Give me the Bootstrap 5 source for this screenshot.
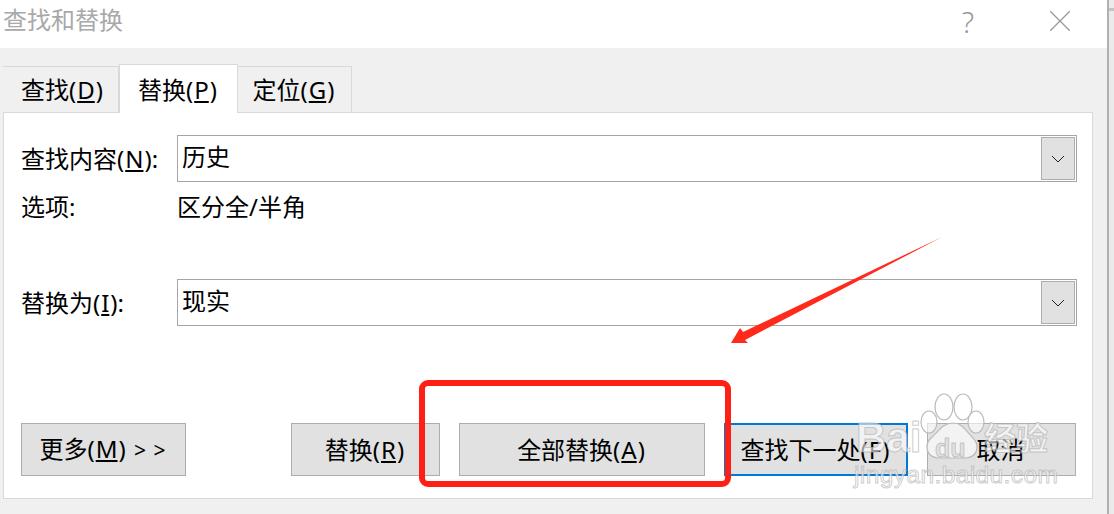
<!DOCTYPE html>
<html lang="zh-CN">
  <head>
    <meta charset="UTF-8" />
    <title>查找和替换</title>
    <link href="https://cdn.jsdelivr.net/npm/bootstrap@5.3.2/dist/css/bootstrap.min.css" rel="stylesheet" />
    <style>
      html, body { height: 514px; overflow: hidden; }
      body {
        background: #ebebeb;
        color: #000;
        font-family: "Noto Sans", "Noto Sans CJK SC", sans-serif;
        font-size: 24px;
        line-height: 34px;
      }
      u { margin: 0 1px; text-underline-offset: 2px; }
      .dlg { width: 1107px; height: 514px; background: #f0f0f0; position: relative; flex: none; }
      .dlg-side { width: 7px; height: 514px; flex: none; border-left: 2px solid #b0b0b0; padding-top: 8px; }
      .dlg-tick { height: 3px; background: #c4c4c4; }
      .dlg-title { height: 48px; background: #fff; padding-left: 3px; color: #a9a9a9; line-height: 40px; }
      .dlg-help { color: #999; width: 30px; text-align: center; margin-right: 67px; font-size: 29px; font-weight: 300; padding-bottom: 4px; }
      .dlg-close { margin-right: 37px; margin-bottom: 6px; }
      .dlg-tabs { padding: 16px 0 0 3px; height: 64px; }
      .dlg-tab { height: 46px; margin-top: 2px; padding-right: 2px; border-top: 1px solid #d9d9d9; border-right: 1px solid #d9d9d9; text-align: center; line-height: 46px; }
      .dlg-tab.first { padding: 0 0 0 3px; }
      .dlg-tab.on { height: 49px; margin-top: 0; background: #fff; border-left: 1px solid #d9d9d9; line-height: 50px; position: relative; z-index: 1; }
      .dlg-panel { width: 1090px; height: 387px; margin-left: 3px; background: #fff; border: 1px solid #d9d9d9; padding: 22px 15px 0 17px; }
      .dlg-row { height: 47px; }
      .dlg-label { width: 156px; flex: none; }
      .dlg-combo { width: 900px; height: 47px; border: 1px solid #a6a6a6; padding: 1px 1px 1px 4px; }
      .dlg-val { padding-bottom: 3px; }
      .dlg-arrow { width: 34px; height: 43px; background: #e1e1e1; border: 1px solid #adadad; }
      .dlg-opts { height: 50px; margin-bottom: 47px; line-height: 50px; }
      .dlg-btns { margin-top: 97px; height: 53px; }
      .dlg-btn { height: 53px; background: #e1e1e1; border: 1px solid #adadad; border-radius: 0; color: #000; font-size: 24px; line-height: 34px; padding: 0 2px 0 0; word-spacing: 2px; }
      .dlg-btn.def { border: 2px solid #0078d7; }
      .dlg-gt { font-size: 21px; }
      .mark-box { position: absolute; left: 419px; top: 380px; width: 312px; height: 107px; border: 6px solid #ff2015; border-radius: 9px; }
      .mark-arrow { position: absolute; left: 728px; top: 234px; }
      .wm { position: absolute; left: 850px; top: 390px; width: 210px; height: 120px; color: rgba(255,255,255,.6); -webkit-text-stroke: 1px rgba(170,170,170,.6); }
      .wm-bai { position: absolute; left: 6px; top: 25px; font: 700 42px/46px "Liberation Sans", sans-serif; }
      .wm-jy { position: absolute; left: 134px; top: 24px; font: 700 32px/44px "Noto Sans CJK SC", sans-serif; }
      .wm-url { position: absolute; left: 4px; top: 70px; font: 400 24.5px/30px "Liberation Sans", sans-serif; letter-spacing: .4px; }
      .wm-du { position: absolute; left: 85px; top: 44px; font: 700 25px/28px "Liberation Sans", sans-serif; color: rgba(210,210,210,.5); }
      .wm-paw { position: absolute; left: 70px; top: 0; }
    </style>
  </head>
  <body class="d-flex">
    <div class="dlg">
      <div class="dlg-title d-flex justify-content-between">
        <span>查找和替换</span>
        <span class="d-flex align-items-center">
          <span class="dlg-help">?</span>
          <svg class="dlg-close" width="20" height="20" viewBox="0 0 20 20"><path d="M0 0 20 20M20 0 0 20" stroke="#999" stroke-width="1.3" fill="none"/></svg>
        </span>
      </div>
      <div class="dlg-tabs d-flex">
        <div class="dlg-tab first" style="width:116px">查找(<u>D</u>)</div>
        <div class="dlg-tab on" style="width:119px">替换(<u>P</u>)</div>
        <div class="dlg-tab" style="width:114px">定位(<u>G</u>)</div>
      </div>
      <div class="dlg-panel">
        <div class="dlg-row d-flex align-items-center">
          <div class="dlg-label">查找内容(<u>N</u>):</div>
          <div class="dlg-combo d-flex justify-content-between align-items-center">
            <span class="dlg-val">历史</span>
            <span class="dlg-arrow d-flex align-items-center justify-content-center"><svg width="14" height="8" viewBox="0 0 14 8"><path d="M1 1 7 7 13 1" stroke="#222" fill="none"/></svg></span>
          </div>
        </div>
        <div class="dlg-opts d-flex">
          <div class="dlg-label">选项:</div>
          <div>区分全/半角</div>
        </div>
        <div class="dlg-row d-flex align-items-center">
          <div class="dlg-label">替换为(<u>I</u>):</div>
          <div class="dlg-combo d-flex justify-content-between align-items-center">
            <span class="dlg-val">现实</span>
            <span class="dlg-arrow d-flex align-items-center justify-content-center"><svg width="14" height="8" viewBox="0 0 14 8"><path d="M1 1 7 7 13 1" stroke="#222" fill="none"/></svg></span>
          </div>
        </div>
        <div class="dlg-btns d-flex">
          <button class="dlg-btn" style="width:165px">更多(<u>M</u>) <span class="dlg-gt">&gt; &gt;</span></button>
          <button class="dlg-btn" style="width:149px;margin-left:105px">替换(<u>R</u>)</button>
          <button class="dlg-btn" style="width:246px;margin-left:19px">全部替换(<u>A</u>)</button>
          <button class="dlg-btn def" style="width:184px;margin-left:19px">查找下一处(<u>F</u>)</button>
          <button class="dlg-btn" style="width:149px;margin-left:19px">取消</button>
        </div>
      </div>

      <div class="mark-box"></div>
      <svg class="mark-arrow" width="218" height="112" viewBox="0 0 218 112"><polygon points="214,3 15,98 12,94 3,109 20,109 17,106" fill="#ff2a1c"/></svg>
      <div class="wm">
        <svg class="wm-paw" width="70" height="80" viewBox="0 0 70 80">
          <g fill="rgba(255,255,255,.6)" stroke="#bbb" stroke-width="1.2">
            <ellipse cx="9" cy="32" rx="8" ry="11"/>
            <ellipse cx="24" cy="17" rx="9" ry="13"/>
            <ellipse cx="43" cy="17" rx="9" ry="13"/>
            <ellipse cx="56" cy="32" rx="8" ry="11"/>
            <path d="M33 33c9 0 12 7 20 15 7 7 5 19-7 20H18C6 67 4 55 11 48c8-7 12-15 22-15z"/>
          </g>
        </svg>
        <span class="wm-bai">Bai</span>
        <span class="wm-du">du</span>
        <span class="wm-jy">经验</span>
        <span class="wm-url">jingyan.baidu.com</span>
      </div>
    </div>
    <div class="dlg-side"><div class="dlg-tick"></div></div>
    <script src="https://cdn.jsdelivr.net/npm/bootstrap@5.3.2/dist/js/bootstrap.bundle.min.js"></script>
  </body>
</html>
